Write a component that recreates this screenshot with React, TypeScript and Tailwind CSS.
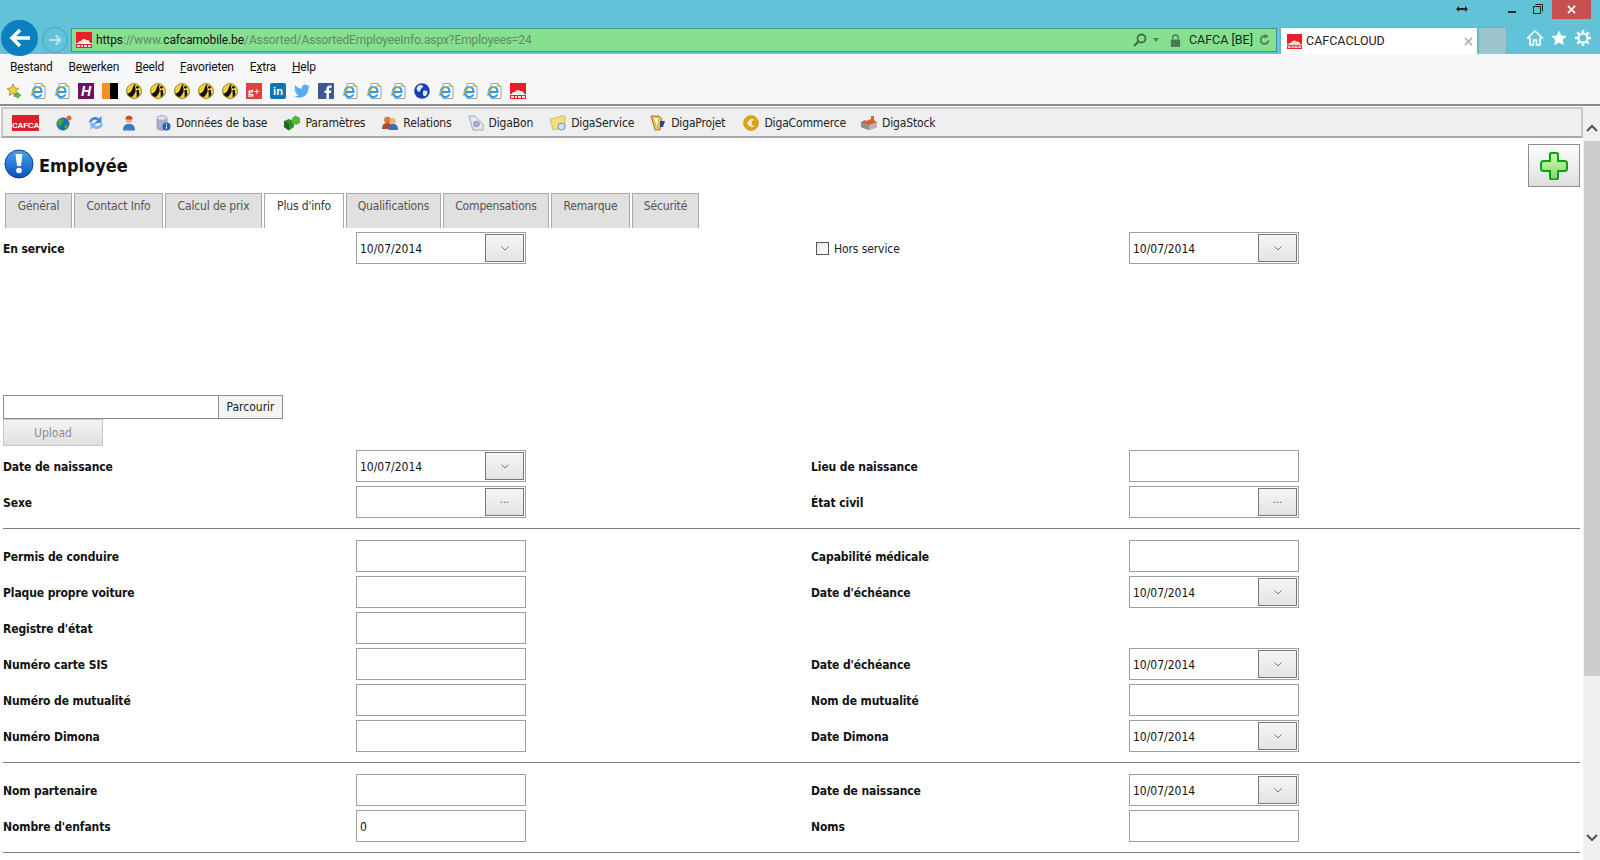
import React from "react";

const UI = "[font-family:Roboto,'Noto_Sans',sans-serif] [font-stretch:normal]";

function Cafca({ className = "w-4 h-4" }: { className?: string }) {
  return (
    <svg viewBox="0 0 16 16" className={className}>
      <rect width="16" height="16" fill="#ee1c25" />
      <path d="M2 11c0-2 2-2 3-2 .5-2 4-3 5-.8 2-.6 4 .8 4 2.800z" fill="#fff" opacity=".9" />
      <rect x="0" y="11" width="16" height="1" fill="#fff" />
      <path d="M1 13h3v2H1zM5 13h2v2H5zM8 13h3v2H8zM12 13h3v2h-3z" fill="#fff" opacity=".85" />
    </svg>
  );
}
function IEDoc() {
  return (
    <svg viewBox="0 0 16 16" className="w-4 h-4">
      <path d="M5 .5h7l3 3v12H5z" fill="#fff" stroke="#a0a0a0" />
      <path d="M12 .5v3h3" fill="#e8e8e8" stroke="#a0a0a0" />
      <path d="M3 9h8.500c0-3-1.800-5-4.300-5S2.800 6.200 2.800 9.200s2 4.800 4.500 4.800c1.900 0 3.400-1 4-2.500" fill="none" stroke="#2a9cec" strokeWidth="2" />
      <path d="M1.200 13.500C.2 11.500 5 4 12.500 2" fill="none" stroke="#f2b71c" strokeWidth="1.200" />
    </svg>
  );
}
function Yellow() {
  return (
    <svg viewBox="0 0 16 16" className="w-4 h-4">
      <circle cx="8" cy="8" r="7.500" fill="#f7d23a" stroke="#6d5c10" strokeWidth=".7" />
      <path d="M1 10.500c2.500 0 4.500-2 5.500-5C7 3.500 8 1.500 9.500 1c-.5 2-.5 3.500 0 5 .5 2-.5 5-3.500 8-2 0-4-1.500-5-3.500z" fill="#111" />
      <path d="M10.500 7h2.300l.5 5-2.500 2.500z" fill="#111" />
      <circle cx="11.500" cy="4.300" r="1.400" fill="#111" />
    </svg>
  );
}
function Globe() {
  return (
    <svg viewBox="0 0 16 16" className="w-4 h-4">
      <circle cx="8" cy="8" r="7.800" fill="#1a3fb0" />
      <path d="M4 3c2-1.500 5-1 5 .5S7 5 6.500 7 5 9.500 3.500 8 2.500 4.500 4 3zM9 8c2-.8 4.500-.5 4.500 1.500S11 14 9.800 13 9 10 9 8z" fill="#d9edf9" />
    </svg>
  );
}
function Favs() {
  return (
    <div className="flex items-center h-[24px] pl-[6px] gap-2">
      <svg viewBox="0 0 16 16" className="w-4 h-4">
        <path d="M7 1l1.800 4 4.200.4-3.200 2.800 1 4.200L7 10.300 3.200 12.400l1-4.200L1 5.400 5.200 5z" fill="#f8d04a" stroke="#a8801e" strokeWidth=".8" />
        <path d="M8 11h3V9l4 3.200-4 3.200v-2H8z" fill="#5ec03c" stroke="#2d7a22" strokeWidth=".5" />
      </svg>
      <IEDoc />
      <IEDoc />
      <div className="w-4 h-4 bg-[#6d0f63] text-white text-[14px] leading-4 font-bold italic text-center [font-family:'Liberation_Sans',sans-serif]">H</div>
      <div className="w-4 h-4 flex">
        <div className="w-2 bg-[#f68e26]" />
        <div className="w-2 bg-black" />
      </div>
      <Yellow />
      <Yellow />
      <Yellow />
      <Yellow />
      <Yellow />
      <div className="w-4 h-4 bg-[#d9453a] text-white text-[11px] leading-4 font-bold text-center [font-family:'Liberation_Serif',serif]">g+</div>
      <div className="w-4 h-4 rounded-[2px] bg-[#0b76b5] text-white text-[11px] leading-4 font-bold text-center [font-family:'Liberation_Sans',sans-serif]">in</div>
      <svg viewBox="0 0 16 16" className="w-4 h-4">
        <path d="M16 3.200c-.6.3-1.200.4-1.900.5.700-.4 1.200-1 1.400-1.800-.6.400-1.300.6-2.100.8a3.300 3.300 0 0 0-5.600 3C5.100 5.600 2.700 4.300 1.100 2.300c-.9 1.500-.4 3.400 1 4.400-.5 0-1-.2-1.500-.4 0 1.600 1.100 3 2.600 3.300-.5.100-1 .2-1.500.1.400 1.300 1.600 2.200 3.100 2.300A6.700 6.700 0 0 1 0 13.300c6.600 3.800 15-.6 14.400-8.500.6-.4 1.200-1 1.600-1.600z" fill="#55acee" />
      </svg>
      <svg viewBox="0 0 16 16" className="w-4 h-4">
        <rect width="16" height="16" rx="1" fill="#3b5998" />
        <path d="M11 16v-6h2l.3-2.500H11V6c0-.7.3-1.200 1.300-1.200h1.200V2.600C13 2.500 12.300 2.500 11.700 2.500 9.800 2.500 8.500 3.600 8.500 5.700v1.800h-2V10h2v6z" fill="#fff" />
      </svg>
      <IEDoc />
      <IEDoc />
      <IEDoc />
      <Globe />
      <IEDoc />
      <IEDoc />
      <IEDoc />
      <Cafca />
    </div>
  );
}

function Chrome() {
  return (
    <div className={`bg-[#62c3d8] h-[54px] ${UI}`}>
      <div className="flex items-start justify-end h-[27px] pr-[9px]">
        <svg viewBox="0 0 12 8" className="w-3 h-2 mt-[5px] mr-[40px]">
          <path d="M0 4l3-3v2h6V1l3 3-3 3V5H3v2z" fill="#222" />
        </svg>
        <div className="w-2 h-[2px] bg-[#222] mt-[11px] mr-[17px]" />
        <svg viewBox="0 0 10 10" className="w-[10px] h-[10px] mt-[4px] mr-[9px]">
          <path d="M2.500.5h7v7M.5 2.500h7v7h-7z" fill="none" stroke="#222" />
        </svg>
        <div className="w-[39px] h-[19px] bg-[#c75050] flex items-center justify-center">
          <svg viewBox="0 0 10 10" className="w-[9px] h-[9px]">
            <path d="M1 1l8 8M9 1l-8 8" stroke="#fff" strokeWidth="2" />
          </svg>
        </div>
      </div>
      <div className="flex h-[27px]">
        <div className="relative z-10 w-[37px] h-[36px] -mt-[7px] ml-px rounded-full bg-[#0a80c0] flex items-center justify-center overflow-hidden">
          <svg viewBox="0 0 24 24" className="w-[24px] h-[24px]">
            <path d="M22 12H4M12 4l-8 8 8 8" fill="none" stroke="#fff" strokeWidth="3.500" />
          </svg>
        </div>
        <div className="w-[26px] h-[26px] ml-[4px] rounded-full border border-[#4a9fb3] flex items-center justify-center">
          <svg viewBox="0 0 24 24" className="w-4 h-4">
            <path d="M3 12h17M13 5l7 7-7 7" fill="none" stroke="#bfe3ea" strokeWidth="3" />
          </svg>
        </div>
        <div className="w-[1206px] h-[24px] ml-[3px] mt-px bg-[#86e08f] border border-[#458f9b] flex items-center pl-[4px] text-[12px] text-[#1c3a20]">
          <Cafca />
          <div className="ml-[4px] whitespace-nowrap tracking-[-0.1px]">
            <span className="text-[#111]">https</span>
            <span className="text-[#5f8a66]">://www.</span>
            <span className="text-[#111]">cafcamobile.be</span>
            <span className="text-[#5f8a66]">/Assorted/AssortedEmployeeInfo.aspx?Employees=24</span>
          </div>
          <div className="flex-1" />
          <svg viewBox="0 0 14 14" className="w-[14px] h-[14px]">
            <circle cx="8.500" cy="5.500" r="4" fill="none" stroke="#3f6e45" strokeWidth="1.800" />
            <path d="M5.500 8.500L1 13" stroke="#3f6e45" strokeWidth="2.200" />
          </svg>
          <div className="ml-[6px] w-0 h-0 border-x-[3px] border-x-transparent border-t-[4px] border-t-[#55795a]" />
          <svg viewBox="0 0 12 14" className="ml-[11px] w-[11px] h-[13px]">
            <rect x="1" y="6" width="10" height="8" fill="#4a7a50" />
            <path d="M3 6V4a3 3 0 0 1 6 0v2" fill="none" stroke="#4a7a50" strokeWidth="1.500" />
          </svg>
          <span className="ml-[8px] text-[12.500px] text-[#1a2a1c] whitespace-nowrap">CAFCA [BE]</span>
          <svg viewBox="0 0 14 14" className="ml-[6px] mr-[5px] w-3 h-3">
            <path d="M11 7.500A4.500 4.500 0 1 1 7 2.500" fill="none" stroke="#4a7a50" strokeWidth="2" />
            <path d="M6.500 0l5 2.500-5 3z" fill="#4a7a50" />
          </svg>
        </div>
        <div className="w-[198px] ml-[3px] bg-white border-x border-t border-[#6cb5c5] flex items-center pl-[6px] pr-[4px] text-[12.500px] text-[#222]">
          <Cafca className="w-[15px] h-[15px]" />
          <span className="ml-[4px] flex-1 pt-px">CAFCACLOUD</span>
          <svg viewBox="0 0 10 10" className="w-[9px] h-[9px]">
            <path d="M1 1l8 8M9 1l-8 8" stroke="#b5b5b5" strokeWidth="2" />
          </svg>
        </div>
        <div className="w-[29px] bg-[#9cc5cc] border-x border-t border-[#6cb5c5]" />
        <div className="flex items-center ml-[20px] gap-[8px] pb-[5px]">
          <svg viewBox="0 0 16 16" className="w-4 h-4">
            <path d="M8 1L.5 8H3v7h3.500v-5h3v5H13V8h2.500z" fill="none" stroke="#fff" strokeWidth="1.500" />
          </svg>
          <svg viewBox="0 0 16 16" className="w-4 h-4">
            <path d="M8 .5l2.300 5 5.400.6-4 3.700 1.100 5.400L8 12.500l-4.800 2.700 1.100-5.400-4-3.700 5.400-.6z" fill="#fff" />
          </svg>
          <svg viewBox="0 0 16 16" className="w-4 h-4">
            <circle cx="8" cy="8" r="4.500" fill="none" stroke="#fff" strokeWidth="2" />
            <path d="M8 0v3M8 13v3M0 8h3M13 8h3M2.300 2.300l2 2M11.700 11.700l2 2M2.300 13.700l2-2M11.700 4.300l2-2" stroke="#fff" strokeWidth="2.500" />
          </svg>
        </div>
      </div>
    </div>
  );
}

function Menu() {
  const items: [string, string, string, string][] = [
    ["B", "e", "stand", "ml-[10px]"],
    ["Be", "w", "erken", "ml-[16px]"],
    ["", "B", "eeld", "ml-[16px]"],
    ["", "F", "avorieten", "ml-[16px]"],
    ["E", "x", "tra", "ml-[16px]"],
    ["", "H", "elp", "ml-[16px]"],
  ];
  return (
    <div className={`flex items-center h-[25px] text-[12px] tracking-[-0.2px] text-[#111] ${UI}`}>
      {items.map(([a, b, c, m]) => (
        <span key={a + b + c} className={m}>
          {a}
          <span className="underline">{b}</span>
          {c}
        </span>
      ))}
    </div>
  );
}

function Ico({ kind }: { kind: string }) {
  const cls = "w-4 h-4 shrink-0";
  if (kind === "globe")
    return (
      <svg viewBox="0 0 16 16" className={cls}>
        <circle cx="7" cy="9" r="6.500" fill="#1f6fa8" />
        <path d="M3 5c2-1.500 4-1 4.500.5S5 8 5 10s-2 1.500-3 0-.5-4 1-5zM9 10c1.500-.5 3.500-.5 3 1.500S9.500 15 9 14s-.5-3 0-4z" fill="#4fa83a" />
        <circle cx="13" cy="3" r="2.500" fill="#e0663a" />
      </svg>
    );
  if (kind === "sync")
    return (
      <svg viewBox="0 0 16 16" className={cls}>
        <path d="M1 7.500C1.500 3 6.500 0 11 3.500l2.500-2.500v7H6.500l2.800-2.800C7 4 4 5 3.500 7.500z" fill="#3f8bdc" />
        <path d="M15 8.500c-.5 4.500-5.500 7.500-10 4L2.500 15V8h7l-2.800 2.800C9 12 12 11 12.500 8.500z" fill="#7db6ee" />
      </svg>
    );
  if (kind === "user")
    return (
      <svg viewBox="0 0 16 16" className={cls}>
        <circle cx="8" cy="5" r="3.200" fill="#f2b184" />
        <path d="M4.500 4.500C4.500 1.500 6 .8 8 .8s3.500.7 3.500 3.700z" fill="#d6432b" />
        <path d="M2 15.500c0-5 2-6.500 6-6.500s6 1.500 6 6.500z" fill="#3f78c4" />
      </svg>
    );
  if (kind === "db")
    return (
      <svg viewBox="0 0 16 16" className={cls}>
        <path d="M2 3c0-3 10-3 10 0v10c0 3-10 3-10 0z" fill="#a7afcb" stroke="#7c84a3" strokeWidth=".6" />
        <ellipse cx="7" cy="3" rx="4.500" ry="1.700" fill="#dfe3ef" />
        <circle cx="11.500" cy="11.500" r="4" fill="#1f62c4" />
        <rect x="11" y="8.800" width="1" height="1.300" fill="#fff" />
        <rect x="11" y="10.800" width="1" height="3" fill="#fff" />
      </svg>
    );
  if (kind === "cubes")
    return (
      <svg viewBox="0 0 16 16" className={cls}>
        <path d="M0 6l5-2 5 2v6l-5 3.500L0 12z" fill="#2f8f28" />
        <path d="M8 3l3.500-2.500L16 3v5l-4 2-4-2z" fill="#57b83a" />
        <path d="M0 6l5 2.500v7L0 12z" fill="#1c6a1a" />
      </svg>
    );
  if (kind === "people")
    return (
      <svg viewBox="0 0 16 16" className={cls}>
        <circle cx="5.500" cy="5" r="3.300" fill="#d9793c" />
        <path d="M0 14c0-4.500 2-6 5.500-6s5 1.500 5 6z" fill="#b84a2a" />
        <circle cx="11" cy="6" r="2.900" fill="#e9b27a" />
        <path d="M6.500 15c0-4.500 1.500-6 4.500-6s5 1.500 5 6z" fill="#3a6cc0" />
      </svg>
    );
  if (kind === "doc")
    return (
      <svg viewBox="0 0 16 16" className={cls}>
        <path d="M1 1h6l8 8v6H5z" fill="#e5e9f5" stroke="#8d94b5" strokeWidth=".8" />
        <circle cx="8.500" cy="9" r="3" fill="#a9afd1" stroke="#7d84ad" strokeWidth=".6" />
      </svg>
    );
  if (kind === "service")
    return (
      <svg viewBox="0 0 16 16" className={cls}>
        <path d="M0 4l9-2 1-1h5v11l-12 3z" fill="#f3dc7e" stroke="#bfa54a" strokeWidth=".6" />
        <circle cx="11.500" cy="11.500" r="3.500" fill="#cfe2f7" stroke="#6a93c4" />
      </svg>
    );
  if (kind === "projet")
    return (
      <svg viewBox="0 0 16 16" className={cls}>
        <path d="M1 1h8l3 3-2 11H5z" fill="#eac14e" stroke="#8a6a1e" strokeWidth=".8" />
        <path d="M4 3h4l-1 8z" fill="#fff" />
        <path d="M10 6h5l-2 6h-3z" fill="#2c4a8c" />
      </svg>
    );
  if (kind === "coin")
    return (
      <svg viewBox="0 0 16 16" className={cls}>
        <circle cx="8" cy="8" r="7.500" fill="#d9a514" stroke="#b58410" strokeWidth=".5" />
        <path d="M10.500 5.200C8.500 4 6 5.500 6 8s2.500 4 4.500 2.800M4.500 7.200H9M4.500 8.800H9" fill="none" stroke="#fff" strokeWidth="1.300" />
      </svg>
    );
  return (
    <svg viewBox="0 0 16 16" className={cls}>
      <path d="M0 7l4-2 1 1 5-2V1h3v4l3 2v5l-8 3-8-3z" fill="#d8613a" />
      <path d="M0 7l8 3v5l-8-3z" fill="#8f8f8f" />
      <path d="M8 10l8-3v5l-8 3z" fill="#b5b5b5" />
    </svg>
  );
}

function Toolbar() {
  const Item = ({ kind, label, m }: { kind: string; label: string; m: string }) => (
    <div className={`flex items-center gap-[5px] ${m}`}>
      <Ico kind={kind} />
      <span className="whitespace-nowrap pt-px">{label}</span>
    </div>
  );
  return (
    <div className="h-[31px] ml-px mr-[17px] mt-px border-2 border-[#a9a9a9] border-t-[#c8c8c8] border-r-[#c8c8c8] border-l-[#c8c8c8] bg-[#efefef] flex items-center text-[12px] tracking-[-0.15px] text-[#222]">
      <div className="w-[27px] h-[16px] ml-[9px] bg-[#d8222a] flex items-end justify-center text-white text-[8px] leading-[10px] font-bold [font-family:'Liberation_Sans',sans-serif]">
        CAFCA
      </div>
      <div className="ml-[17px]">
        <Ico kind="globe" />
      </div>
      <div className="ml-[16px]">
        <Ico kind="sync" />
      </div>
      <div className="ml-[17px]">
        <Ico kind="user" />
      </div>
      <Item kind="db" label="Données de base" m="ml-[18px]" />
      <Item kind="cubes" label="Paramètres" m="ml-[17px]" />
      <Item kind="people" label="Relations" m="ml-[17px]" />
      <Item kind="doc" label="DigaBon" m="ml-[16px]" />
      <Item kind="service" label="DigaService" m="ml-[17px]" />
      <Item kind="projet" label="DigaProjet" m="ml-[16px]" />
      <Item kind="coin" label="DigaCommerce" m="ml-[18px]" />
      <Item kind="stock" label="DigaStock" m="ml-[15px]" />
    </div>
  );
}

function Text({ value = "" }: { value?: string }) {
  return (
    <div className="w-[170px] h-[32px] border border-[#a0a0a0] bg-white flex items-center pl-[3px] pt-px text-[12px] text-[#111]">{value}</div>
  );
}
function Combo({ value = "", dots }: { value?: string; dots?: boolean }) {
  return (
    <div className="w-[170px] h-[32px] border border-[#a0a0a0] bg-white flex items-center pl-[3px] pr-px text-[12px] text-[#111]">
      <span className="flex-1 pt-px">{value}</span>
      <div className="w-[39px] h-[28px] border border-[#777] bg-gradient-to-b from-[#f6f6f6] to-[#e3e3e3] flex items-center justify-center">
        {dots ? (
          <span className="text-[11px] leading-3 text-[#555] -mt-1">...</span>
        ) : (
          <svg viewBox="0 0 8 5" className="w-2 h-[5px]">
            <path d="M.5.500L4 4 7.500.500" fill="none" stroke="#777" />
          </svg>
        )}
      </div>
    </div>
  );
}
function Label({ children }: { children: React.ReactNode }) {
  return <div className="text-[12px] tracking-[-0.1px] pt-px font-bold text-[#111] whitespace-nowrap">{children}</div>;
}
function Row({
  l,
  lc,
  r,
  rc,
}: {
  l: React.ReactNode;
  lc: React.ReactNode;
  r?: React.ReactNode;
  rc?: React.ReactNode;
}) {
  return (
    <div className="grid grid-cols-[353px_170px_285px_318px_170px] items-center h-[32px]">
      <Label>{l}</Label>
      {lc}
      <div />
      {r ? <Label>{r}</Label> : <div />}
      {rc ?? <div />}
    </div>
  );
}
const D = "10/07/2014";

function Tabs() {
  const tabs: [string, string][] = [
    ["Général", "w-[67px]"],
    ["Contact Info", "w-[89px]"],
    ["Calcul de prix", "w-[97px]"],
    ["Plus d'info", "w-[80px]"],
    ["Qualifications", "w-[95px]"],
    ["Compensations", "w-[106px]"],
    ["Remarque", "w-[79px]"],
    ["Sécurité", "w-[67px]"],
  ];
  return (
    <div className="flex gap-[2px] ml-[2px] mt-[6px] h-[35px] text-[12px] tracking-[-0.15px]">
      {tabs.map(([t, w]) =>
        t === "Plus d'info" ? (
          <div key={t} className={`${w} border-x border-t border-[#a9a9a9] bg-white text-center pt-[3px] text-[#333]`}>
            {t}
          </div>
        ) : (
          <div key={t} className={`${w} border-x border-t border-[#a9a9a9] bg-[#e0e0e0] text-center pt-[3px] text-[#555]`}>
            {t}
          </div>
        )
      )}
    </div>
  );
}

function Form() {
  return (
    <div className="flex-1 pl-[3px] pr-[3px] min-w-0">
      <div className="flex justify-between items-start pt-[6px]">
        <div className="flex items-center mt-[4px] ml-px gap-[5px]">
          <svg viewBox="0 0 30 30" className="w-[30px] h-[30px]">
            <defs>
              <linearGradient id="blue" x1="0" y1="0" x2="0" y2="1">
                <stop offset="0" stopColor="#4aa3f0" />
                <stop offset="1" stopColor="#0a50b8" />
              </linearGradient>
            </defs>
            <circle cx="15" cy="15" r="14" fill="url(#blue)" stroke="#0a3f92" />
            <path d="M11.500 5h7l-1.500 12h-4z" fill="#fff" />
            <circle cx="15" cy="21.500" r="2.800" fill="#fff" />
          </svg>
          <div className="text-[18px] pt-[4px] font-bold text-[#111]">Employée</div>
        </div>
        <div className="w-[52px] h-[43px] border border-[#8c8c8c] bg-gradient-to-b from-[#fdfdfd] via-[#efefef] to-[#dedede] flex items-center justify-center">
          <svg viewBox="0 0 28 28" className="w-[28px] h-[28px]">
            <defs>
              <linearGradient id="g" x1="0" y1="0" x2="0" y2="1">
                <stop offset="0" stopColor="#d8f8c0" />
                <stop offset="1" stopColor="#7fd860" />
              </linearGradient>
            </defs>
            <path d="M10 2.500a1.500 1.500 0 0 1 1.500-1.500h5A1.500 1.500 0 0 1 18 2.500V9h6.500A2.500 2.500 0 0 1 27 11.500v5a2.500 2.500 0 0 1-2.500 2.500H18v6.500a2 2 0 0 1-2 2h-4a2 2 0 0 1-2-2V19H3.500A2.500 2.500 0 0 1 1 16.500v-5A2.500 2.500 0 0 1 3.500 9H10z" fill="url(#g)" stroke="#0da00f" strokeWidth="2" />
          </svg>
        </div>
      </div>
      <Tabs />
      <div className="mt-[4px]">
        <Row
          l="En service"
          lc={<Combo value={D} />}
          r={
            <div className="flex items-center ml-[5px] font-normal text-[12px] tracking-[-0.1px] text-[#222]">
              <div className="w-[13px] h-[13px] border border-[#555] bg-gradient-to-br from-[#e8e8e8] to-white mr-[5px]" />
              Hors service
            </div>
          }
          rc={<Combo value={D} />}
        />
      </div>
      <div className="flex mt-[131px] h-[24px] w-[280px] text-[12px] text-[#222]">
        <div className="w-[216px] border border-[#8c8c8c] bg-white" />
        <div className="w-[64px] border border-l-0 border-[#8c8c8c] bg-[#f4f4f4] flex items-center justify-center">Parcourir</div>
      </div>
      <div className="w-[100px] h-[27px] border border-[#c6c6c6] bg-gradient-to-b from-[#f3f3f3] to-[#e1e1e1] flex items-center justify-center text-[12px] text-[#8c8c8c]">
        Upload
      </div>
      <div className="mt-[4px] flex flex-col gap-[4px]">
        <Row l="Date de naissance" lc={<Combo value={D} />} r="Lieu de naissance" rc={<Text />} />
        <Row l="Sexe" lc={<Combo dots />} r="État civil" rc={<Combo dots />} />
      </div>
      <div className="mt-[10px] h-px bg-[#7d7d7d]" />
      <div className="mt-[11px] flex flex-col gap-[4px]">
        <Row l="Permis de conduire" lc={<Text />} r="Capabilité médicale" rc={<Text />} />
        <Row l="Plaque propre voiture" lc={<Text />} r="Date d'échéance" rc={<Combo value={D} />} />
        <Row l="Registre d'état" lc={<Text />} />
        <Row l="Numéro carte SIS" lc={<Text />} r="Date d'échéance" rc={<Combo value={D} />} />
        <Row l="Numéro de mutualité" lc={<Text />} r="Nom de mutualité" rc={<Text />} />
        <Row l="Numéro Dimona" lc={<Text />} r="Date Dimona" rc={<Combo value={D} />} />
      </div>
      <div className="mt-[10px] h-px bg-[#7d7d7d]" />
      <div className="mt-[11px] flex flex-col gap-[4px]">
        <Row l="Nom partenaire" lc={<Text />} r="Date de naissance" rc={<Combo value={D} />} />
        <Row l="Nombre d'enfants" lc={<Text value="0" />} r="Noms" rc={<Text />} />
      </div>
      <div className="mt-[10px] h-px bg-[#7d7d7d]" />
    </div>
  );
}

function Scrollbar() {
  return (
    <div className="w-[17px] -mt-[31px] h-[753px] bg-[#f0f0f0] flex flex-col items-center">
      <div className="h-[34px] w-full flex items-center justify-center pt-[8px]">
        <svg viewBox="0 0 12 8" className="w-3 h-2">
          <path d="M1 7l5-5 5 5" fill="none" stroke="#555" strokeWidth="2" />
        </svg>
      </div>
      <div className="w-full h-[535px] bg-[#cdcdcd] ml-[2px]" />
      <div className="flex-1" />
      <div className="h-[16px] w-full flex items-center justify-center mb-[14px]">
        <svg viewBox="0 0 12 8" className="w-3 h-2">
          <path d="M1 1l5 5 5-5" fill="none" stroke="#555" strokeWidth="2" />
        </svg>
      </div>
    </div>
  );
}

export default function App() {
  return (
    <div className="w-[1600px] h-[860px] overflow-hidden bg-white [font-family:'DejaVu_Sans',sans-serif] [font-stretch:condensed]">
      <Chrome />
      <div className="bg-[#f7f7f7] h-[52px] border-b-2 border-[#8a8a8a]">
        <Menu />
        <Favs />
      </div>
      <Toolbar />
      <div className="flex">
        <Form />
        <Scrollbar />
      </div>
    </div>
  );
}
